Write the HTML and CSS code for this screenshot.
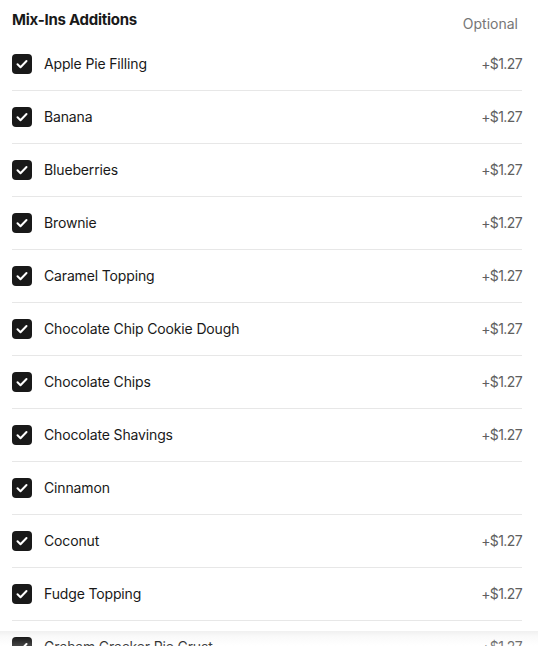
FILE: index.html
```html
<!DOCTYPE html>
<html>
<head>
<meta charset="utf-8">
<link rel="stylesheet" href="styles.css">
</head>
<body>
<div class="page">
  <div class="header">
    <h2 class="title">Mix-Ins Additions</h2>
    <span class="optional">Optional</span>
  </div>
  <ul class="list">
    <li class="row"><span class="box"><svg viewBox="0 0 20 20"><path d="M5.5 10.3l3 3 6-6.3"/></svg></span><span class="name">Apple Pie Filling</span><span class="price">+$1.27</span></li>
    <li class="row"><span class="box"><svg viewBox="0 0 20 20"><path d="M5.5 10.3l3 3 6-6.3"/></svg></span><span class="name">Banana</span><span class="price">+$1.27</span></li>
    <li class="row"><span class="box"><svg viewBox="0 0 20 20"><path d="M5.5 10.3l3 3 6-6.3"/></svg></span><span class="name">Blueberries</span><span class="price">+$1.27</span></li>
    <li class="row"><span class="box"><svg viewBox="0 0 20 20"><path d="M5.5 10.3l3 3 6-6.3"/></svg></span><span class="name">Brownie</span><span class="price">+$1.27</span></li>
    <li class="row"><span class="box"><svg viewBox="0 0 20 20"><path d="M5.5 10.3l3 3 6-6.3"/></svg></span><span class="name">Caramel Topping</span><span class="price">+$1.27</span></li>
    <li class="row"><span class="box"><svg viewBox="0 0 20 20"><path d="M5.5 10.3l3 3 6-6.3"/></svg></span><span class="name">Chocolate Chip Cookie Dough</span><span class="price">+$1.27</span></li>
    <li class="row"><span class="box"><svg viewBox="0 0 20 20"><path d="M5.5 10.3l3 3 6-6.3"/></svg></span><span class="name">Chocolate Chips</span><span class="price">+$1.27</span></li>
    <li class="row"><span class="box"><svg viewBox="0 0 20 20"><path d="M5.5 10.3l3 3 6-6.3"/></svg></span><span class="name">Chocolate Shavings</span><span class="price">+$1.27</span></li>
    <li class="row"><span class="box"><svg viewBox="0 0 20 20"><path d="M5.5 10.3l3 3 6-6.3"/></svg></span><span class="name">Cinnamon</span></li>
    <li class="row"><span class="box"><svg viewBox="0 0 20 20"><path d="M5.5 10.3l3 3 6-6.3"/></svg></span><span class="name">Coconut</span><span class="price">+$1.27</span></li>
    <li class="row"><span class="box"><svg viewBox="0 0 20 20"><path d="M5.5 10.3l3 3 6-6.3"/></svg></span><span class="name">Fudge Topping</span><span class="price">+$1.27</span></li>
    <li class="row"><span class="box"><svg viewBox="0 0 20 20"><path d="M5.5 10.3l3 3 6-6.3"/></svg></span><span class="name">Graham Cracker Pie Crust</span><span class="price">+$1.27</span></li>
  </ul>
</div>
<div class="fade"></div>
</body>
</html>
```
FILE: styles.css
```css
html, body {
  margin: 0;
  padding: 0;
  background: #fff;
  overflow: hidden;
  height: 646px;
}
body {
  font-family: Inter, "Noto Sans", sans-serif;
  color: #191919;
}
.page {
  padding: 0 16px 0 12px;
}
.header {
  display: flex;
  justify-content: space-between;
  align-items: flex-start;
  height: 38px;
}
.title {
  margin: 11px 0 0;
  font-size: 15px;
  font-weight: 700;
  letter-spacing: -0.25px;
  line-height: 18px;
}
.optional {
  margin-top: 15px;
  margin-right: 4px;
  font-size: 14px;
  line-height: 18px;
  color: #767676;
}
.list {
  list-style: none;
  margin: 0;
  padding: 0;
}
.row {
  display: flex;
  align-items: center;
  height: 52px;
  border-bottom: 1px solid #e7e7e7;
}
.box {
  width: 20px;
  height: 20px;
  border-radius: 4px;
  background: #191919;
  flex: none;
  display: flex;
}
.box svg {
  width: 20px;
  height: 20px;
  fill: none;
  stroke: #fff;
  stroke-width: 2;
  stroke-linecap: round;
  stroke-linejoin: round;
}
.name {
  margin-left: 12px;
  padding-bottom: 2px;
  font-size: 14px;
  letter-spacing: -0.15px;
  flex: 1;
}
.price {
  padding-bottom: 2px;
  font-size: 14px;
  letter-spacing: -0.6px;
  color: #606060;
}
.fade {
  position: absolute;
  left: 0;
  right: 0;
  top: 631px;
  height: 15px;
  background: linear-gradient(to bottom, rgba(0,0,0,0.06), rgba(0,0,0,0.02) 40%, rgba(255,255,255,0.2));
}
```
